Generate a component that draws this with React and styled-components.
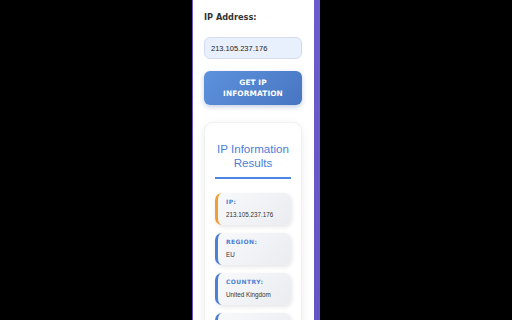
import React from "react";
import styled, { createGlobalStyle } from "styled-components";

const Global = createGlobalStyle`
  html, body { margin: 0; padding: 0; background: #000; }
  body { width: 512px; height: 320px; overflow: hidden; }
`;

const Stage = styled.div`
  display: flex;
  justify-content: center;
  width: 512px;
  height: 320px;
  background: #000;
`;

const Frame = styled.div`
  width: 128px;
  height: 320px;
  box-sizing: border-box;
  padding: 0 6px 0 1px;
  background: linear-gradient(180deg, #6a5ccb, #6656c4);
  display: flex;
  overflow: hidden;
`;

const Panel = styled.div`
  flex: 1;
  background: #fff;
  padding: 12px 12px 0 11px;
  display: flex;
  flex-direction: column;
  overflow: hidden;
  & > * { flex-shrink: 0; }
`;

const Label = styled.div`
  font-family: "DejaVu Sans", Verdana, sans-serif;
  font-weight: 700;
  font-size: 8.2px;
  line-height: 11px;
  color: #333;
`;

const Input = styled.div`
  margin-top: 14px;
  height: 22px;
  box-sizing: border-box;
  border: 1px solid #d3dcec;
  border-radius: 6px;
  background: #e8f0fe;
  display: flex;
  align-items: center;
  padding: 0 6px;
  font-family: "Liberation Sans", Arial, sans-serif;
  font-size: 7.5px;
  color: #222;
`;

const Button = styled.div`
  margin-top: 12px;
  height: 34px;
  border-radius: 6px;
  background: linear-gradient(135deg, #5d92dc, #4875c2);
  box-shadow: 0 2px 5px rgba(60, 100, 170, 0.3);
  display: flex;
  align-items: center;
  justify-content: center;
  text-align: center;
  font-family: "DejaVu Sans", Verdana, sans-serif;
  font-weight: 700;
  font-size: 7.4px;
  line-height: 11px;
  letter-spacing: 0.1px;
  color: #fff;
`;

const Card = styled.div`
  margin-top: 17px;
  background: #fff;
  border-radius: 9px;
  border: 1px solid #f0f1f4;
  box-shadow: 0 2px 8px rgba(0, 0, 0, 0.08);
  padding: 19px 10px 20px;
  display: flex;
  flex-direction: column;
`;

const Title = styled.div`
  font-family: "Liberation Sans", Arial, sans-serif;
  font-size: 11.6px;
  line-height: 13.5px;
  color: #4a80d6;
  text-align: center;
  padding-bottom: 8px;
  border-bottom: 2px solid #4a86e0;
  margin-bottom: 14px;
`;

const List = styled.div`
  display: flex;
  flex-direction: column;
  gap: 8px;
`;

const Item = styled.div`
  height: 32px;
  flex-shrink: 0;
  box-sizing: border-box;
  border-left: 3px solid ${(p) => p.$accent};
  border-radius: 7px;
  background: linear-gradient(135deg, #f8f9fb, #eaecf0);
  box-shadow: 1px 2px 4px rgba(0, 0, 0, 0.1);
  padding: 5px 8px 0;
`;

const ItemLabel = styled.div`
  font-family: "DejaVu Sans", Verdana, sans-serif;
  font-weight: 700;
  font-size: 6px;
  line-height: 8px;
  letter-spacing: 0.4px;
  color: #4a80d6;
  margin-bottom: 4px;
`;

const ItemValue = styled.div`
  font-family: "Liberation Sans", Arial, sans-serif;
  font-size: 6.3px;
  line-height: 9px;
  color: #333;
`;

const items = [
  { label: "IP:", value: "213.105.237.176", accent: "#f0a032" },
  { label: "REGION:", value: "EU", accent: "#4a80d6" },
  { label: "COUNTRY:", value: "United Kingdom", accent: "#4a80d6" },
];

export default function App() {
  return (
    <>
      <Global />
      <Stage>
        <Frame>
          <Panel>
            <Label>IP Address:</Label>
            <Input>213.105.237.176</Input>
            <Button>
              GET IP
              <br />
              INFORMATION
            </Button>
            <Card>
              <Title>
                IP Information
                <br />
                Results
              </Title>
              <List>
                {items.map((it) => (
                  <Item key={it.label} $accent={it.accent}>
                    <ItemLabel>{it.label}</ItemLabel>
                    <ItemValue>{it.value}</ItemValue>
                  </Item>
                ))}
                <Item $accent="#4a80d6" />
              </List>
            </Card>
          </Panel>
        </Frame>
      </Stage>
    </>
  );
}
